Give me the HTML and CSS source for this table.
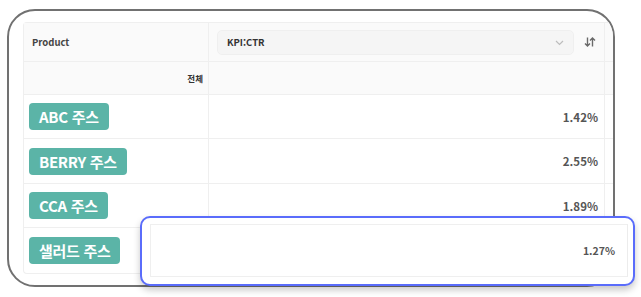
FILE: index.html
```html
<!DOCTYPE html>
<html lang="ko">
<head>
<meta charset="utf-8">
<link rel="stylesheet" href="styles.css">
</head>
<body>
<div class="frame">
  <div class="table">
    <div class="row head">
      <div class="cell c1 label">Product</div>
      <div class="cell c2">
        <div class="select">
          <span class="sel-text">KPI:CTR</span>
          <svg class="chev" width="9" height="6" viewBox="0 0 9 6"><path d="M1 1l3.5 3.5L8 1" fill="none" stroke="#bdbdbd" stroke-width="1.2"/></svg>
        </div>
        <svg class="sort" width="12" height="12" viewBox="0 0 12 12"><path d="M3.5 1.5v8.5M1 7.5l2.5 2.5L6 7.5M8.5 10.5V2M6 4.5L8.5 2 11 4.5" fill="none" stroke="#6a6a6a" stroke-width="1.4"/></svg>
      </div>
      <div class="cell c3"></div>
    </div>
    <div class="row total">
      <div class="cell c1 total-label">전체</div>
      <div class="cell c2"></div>
      <div class="cell c3"></div>
    </div>
    <div class="row item r44">
      <div class="cell c1"><span class="badge">ABC 주스</span></div>
      <div class="cell c2 val">1.42%</div>
      <div class="cell c3"></div>
    </div>
    <div class="row item r45">
      <div class="cell c1"><span class="badge">BERRY 주스</span></div>
      <div class="cell c2 val">2.55%</div>
      <div class="cell c3"></div>
    </div>
    <div class="row item r44">
      <div class="cell c1"><span class="badge">CCA 주스</span></div>
      <div class="cell c2 val">1.89%</div>
      <div class="cell c3"></div>
    </div>
    <div class="row item r45 last">
      <div class="cell c1"><span class="badge">샐러드 주스</span></div>
      <div class="cell c2 val"></div>
      <div class="cell c3"></div>
    </div>
  </div>
</div>
<div class="overlay">
  <div class="overlay-row">1.27%</div>
</div>
</body>
</html>
```

FILE: styles.css
```css
* { box-sizing: border-box; }
html, body { margin: 0; padding: 0; background: #fff; }
body {
  width: 641px; height: 297px; position: relative; overflow: hidden;
  font-family: "Noto Sans CJK KR", "Noto Sans", sans-serif;
}
.frame {
  margin: 9px 0 0 7px;
  width: 608px; height: 278px;
  border: 2px solid #717171;
  border-radius: 28px;
  padding: 11px 0 0 14px;
  overflow: hidden;
}
.table {
  width: 610px;
  border-top: 1px solid #efefef;
  border-left: 1px solid #efefef;
  border-bottom: 1px solid #efefef;
  border-radius: 4px 0 0 4px;
}
.row { display: flex; border-bottom: 1px solid #efefef; }
.row.last { border-bottom: none; }
.cell { display: flex; align-items: center; }
.c1 { width: 185px; border-right: 1px solid #efefef; padding-left: 8px; }
.c2 { width: 396px; border-right: 1px solid #efefef; }
.c3 { flex: 1; }
.head { height: 39px; background: #fafafa; }
.label { font-size: 9.5px; font-weight: 700; color: #444; padding-left: 8px; }
.head .c2 { padding-left: 8px; gap: 0; }
.select {
  width: 357px; height: 25px;
  background: #f5f5f5;
  border: 1px solid #efefef;
  border-radius: 5px;
  display: flex; align-items: center; justify-content: space-between;
  padding: 0 9px 0 9px;
}
.sel-text { font-size: 9.5px; font-weight: 700; color: #333; }
.chev { margin-top: 1px; }
.sort { margin-left: 10px; }
.total { height: 33px; background: #fafafa; }
.total-label { justify-content: flex-end; padding-right: 5px; font-size: 8.5px; font-weight: 700; color: #333; }
.r44 { height: 44px; }
.r45 { height: 45px; }
.item .c1 { padding-left: 5px; }
.badge {
  display: inline-block;
  background: #5bb4a7;
  color: #fff;
  font-size: 15px; font-weight: 700;
  line-height: 27px; height: 27px;
  padding: 0 10px;
  border-radius: 4px;
  letter-spacing: -0.3px;
}
.val { justify-content: flex-end; padding-right: 6px; font-size: 11.5px; font-weight: 700; color: #555; }
.overlay {
  position: absolute;
  left: 140px; top: 216px;
  width: 495px; height: 70px;
  background: #fff;
  border: 2px solid #5a6cfb;
  border-radius: 10px;
  box-shadow: 0 4px 7px rgba(0,0,0,0.22);
  padding: 6px 0 0 8px;
}
.overlay-row {
  width: 478px; height: 53px;
  border: 1px solid #efefef;
  border-right-color: #ececec;
  display: flex; align-items: center; justify-content: flex-end;
  padding-right: 12px;
  font-size: 10.5px; font-weight: 700; color: #555;
}
```
